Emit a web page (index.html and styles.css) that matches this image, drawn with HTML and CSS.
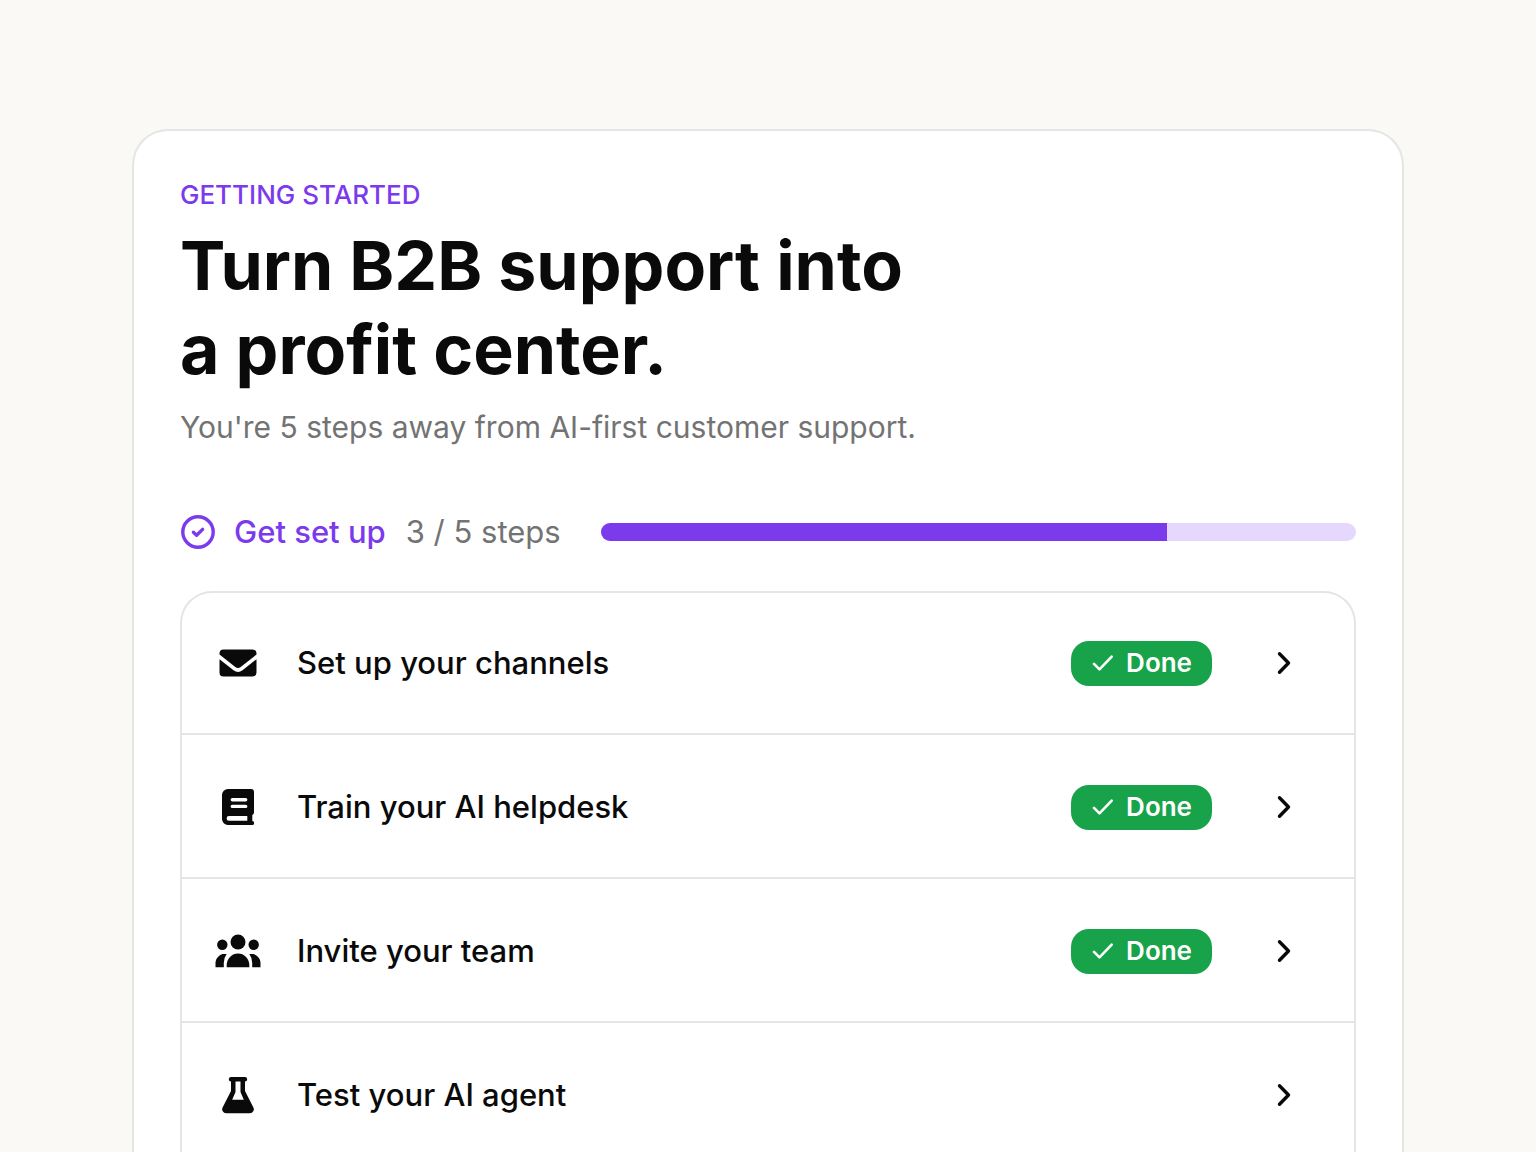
FILE: index.html
```html
<!DOCTYPE html>
<html lang="en">
<head>
    <meta charset="UTF-8">
    <meta name="viewport" content="width=device-width, initial-scale=1.0">
    <title>Getting started</title>
    <link rel="stylesheet" href="styles.css">
</head>
<body>
    <main class="card">
        <header>
            <p class="eyebrow">GETTING STARTED</p>
            <h1>Turn B2B support into<br>a profit center.</h1>
            <p class="subtitle">You're 5 steps away from AI-first customer support.</p>
        </header>

        <div class="progress">
            <svg class="progress-icon" viewBox="0 0 36 36" fill="none" stroke="currentColor" stroke-width="3.4" stroke-linecap="round" stroke-linejoin="round">
                <circle cx="18" cy="18" r="15.2"/>
                <path d="M13.400 18.200l3.200 3 6-5.800"/>
            </svg>
            <span class="progress-title" id="progress-title">Get set up</span>
            <span class="progress-count">3 / 5 steps</span>
            <div class="progress-bar" role="progressbar" aria-labelledby="progress-title" aria-valuenow="75" aria-valuemin="0" aria-valuemax="100">
                <div class="progress-fill" style="width: 75%"></div>
            </div>
        </div>

        <ul class="steps">
            <li>
                <a class="step" href="#channels">
                    <svg class="step-icon" viewBox="0 0 48 48" fill="currentColor">
                        <path d="M9.500 10.500h29a4 4 0 0 1 4 4v1l-15.800 12.400a4.500 4.500 0 0 1-5.400 0l-15.800-12.400v-1a4 4 0 0 1 4-4z"/>
                        <path d="M5.500 20.200l14 11a7.500 7.500 0 0 0 9 0l14-11v13.300a4 4 0 0 1-4 4h-29a4 4 0 0 1-4-4z"/>
                    </svg>
                    <span class="step-name">Set up your channels</span>
                    <span class="badge">
                        <svg viewBox="0 0 24 24"><path d="M3 12.800l5.500 5.500 12.200-12.600"/></svg>
                        Done
                    </span>
                    <svg class="chevron" viewBox="0 0 24 24"><path d="M7.500 2.800l9 9.200-9 9.200"/></svg>
                </a>
            </li>
            <li>
                <a class="step" href="#helpdesk">
                    <svg class="step-icon" viewBox="0 0 48 48" fill="currentColor">
                        <path fill-rule="evenodd" d="M14 6h23a3 3 0 0 1 3 3v20.500a2.600 2.600 0 0 1-1.700 2.500v6a2 2 0 0 1-.3 4h-24a6 6 0 0 1-6-6v-24a6 6 0 0 1 6-6zM18.300 15a1.700 1.700 0 0 0 0 3.400h13.400a1.700 1.700 0 0 0 0-3.400zM18.300 21.700a1.700 1.700 0 0 0 0 3.400h13.400a1.700 1.700 0 0 0 0-3.400zM15 33a2.400 2.400 0 0 0 0 4.800h18.300v-4.800z"/>
                    </svg>
                    <span class="step-name">Train your AI helpdesk</span>
                    <span class="badge">
                        <svg viewBox="0 0 24 24"><path d="M3 12.800l5.500 5.500 12.200-12.600"/></svg>
                        Done
                    </span>
                    <svg class="chevron" viewBox="0 0 24 24"><path d="M7.500 2.800l9 9.200-9 9.200"/></svg>
                </a>
            </li>
            <li>
                <a class="step" href="#team">
                    <svg class="step-icon" viewBox="0 0 48 48" fill="currentColor">
                        <circle cx="24" cy="15" r="7.500"/>
                        <circle cx="8.300" cy="17.700" r="5.200"/>
                        <circle cx="39.700" cy="17.700" r="5.200"/>
                        <path d="M12.700 40.300v-2a11.300 11.700 0 0 1 22.600 0v2z"/>
                        <path d="M1.500 40.300v-4.300a9.200 9.200 0 0 1 11.200-8.900 15 15 0 0 0-2.900 9.600v3.600zM46.500 40.300v-4.300a9.200 9.200 0 0 0-11.200-8.900 15 15 0 0 1 2.900 9.600v3.600z"/>
                    </svg>
                    <span class="step-name">Invite your team</span>
                    <span class="badge">
                        <svg viewBox="0 0 24 24"><path d="M3 12.800l5.500 5.500 12.200-12.600"/></svg>
                        Done
                    </span>
                    <svg class="chevron" viewBox="0 0 24 24"><path d="M7.500 2.800l9 9.200-9 9.200"/></svg>
                </a>
            </li>
            <li>
                <a class="step" href="#agent">
                    <svg class="step-icon" viewBox="0 0 48 48" fill="currentColor">
                        <path fill-rule="evenodd" d="M17 6h14a2.200 2.200 0 0 1 0 4.400v9.600l8.400 16.500a3.900 3.900 0 0 1-3.500 5.700h-23.800a3.900 3.900 0 0 1-3.500-5.700l8.400-16.500v-9.600a2.200 2.200 0 0 1 0-4.400zM21.500 10.400v10.600l-3.300 7.700h11.600l-3.300-7.700v-10.600z"/>
                    </svg>
                    <span class="step-name">Test your AI agent</span>
                    <svg class="chevron" viewBox="0 0 24 24"><path d="M7.500 2.800l9 9.200-9 9.200"/></svg>
                </a>
            </li>
        </ul>
    </main>
</body>
</html>
```
FILE: styles.css
```css
* {
    box-sizing: border-box;
}

body {
    margin: 0;
    padding: 129px 132px 0;
    background: #faf9f5;
    color: #0a0a0a;
    font-family: 'Inter', 'Liberation Sans', sans-serif;
    font-size: 31px;
    line-height: 40px;
}

h1, p, ul {
    margin: 0;
    padding: 0;
}

.card {
    padding: 44px 46px 0;
    background: white;
    border: 2px solid #e5e5e5;
    border-bottom: 0;
    border-radius: 36px 36px 0 0;
}

.eyebrow {
    color: #7c3aed;
    font-size: 26px;
    font-weight: 500;
}

h1 {
    margin-top: 8px;
    font-size: 68px;
    font-weight: 700;
    line-height: 84px;
}

.subtitle {
    margin-top: 16px;
    color: #737373;
    font-size: 30px;
}

.progress {
    display: flex;
    align-items: center;
    margin: 65px 0 39px;
}

.progress-icon {
    width: 36px;
    height: 36px;
    margin-right: 18px;
    color: #7c3aed;
}

.progress-title {
    margin-right: 20px;
    color: #7c3aed;
    font-weight: 500;
}

.progress-count {
    margin-right: 40px;
    color: #737373;
}

.progress-bar {
    flex: 1;
    height: 18px;
    background: #e6d8fc;
    border-radius: 9px;
    overflow: hidden;
}

.progress-fill {
    height: 100%;
    background: #7c3aed;
}

.steps {
    list-style: none;
    border-radius: 32px 32px 0 0;
    box-shadow: inset 0 0 0 2px #e5e5e5;
}

.step {
    display: flex;
    align-items: center;
    height: 144px;
    padding: 2px 60px 0 34px;
    border-bottom: 2px solid #e5e5e5;
    color: inherit;
    font-weight: 500;
    text-decoration: none;
}

.step-icon {
    width: 48px;
    height: 48px;
    margin-right: 35px;
}

.step-name {
    flex: 1;
}

.badge {
    display: flex;
    align-items: center;
    gap: 11px;
    height: 45px;
    margin-right: 60px;
    padding: 0 20px;
    background: #18a34a;
    border-radius: 18px;
    color: white;
    font-size: 26px;
    font-weight: 600;
}

.badge svg {
    width: 24px;
    height: 24px;
    fill: none;
    stroke: currentColor;
    stroke-width: 2.6;
    stroke-linecap: round;
    stroke-linejoin: round;
}

.chevron {
    width: 24px;
    height: 24px;
    fill: none;
    stroke: currentColor;
    stroke-width: 3.4;
    stroke-linecap: round;
    stroke-linejoin: round;
}
```
